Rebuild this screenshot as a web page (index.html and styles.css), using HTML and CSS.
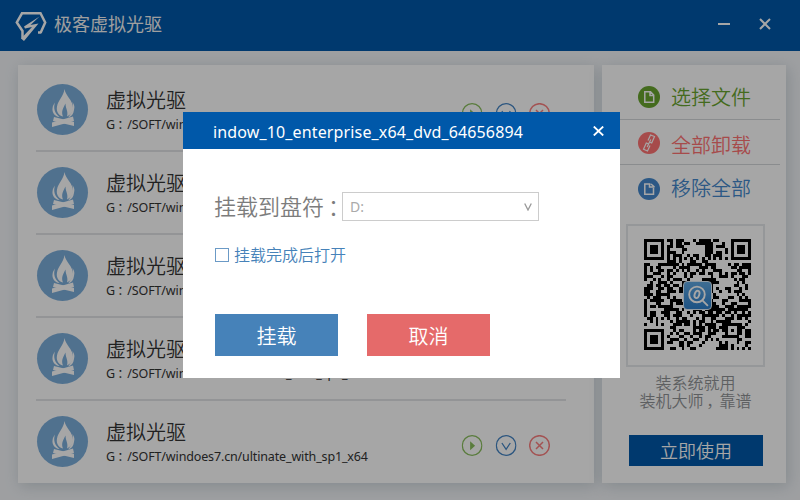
FILE: index.html
```html
<!DOCTYPE html>
<html lang="zh-CN">
<head>
<meta charset="utf-8">
<title>极客虚拟光驱</title>
<link rel="stylesheet" href="styles.css">
</head>
<body>
<svg class="defs" width="0" height="0">
  <symbol id="fire" viewBox="0 0 51 51">
    <path d="M27.500 5c1 7 8.500 11 8.500 19 0 4-2.500 7-6 8.500 1.500-5-1.500-8-1.500-13-2.500 5-4.500 8-2.500 13-4.500-1-7-5-6-10 1-6 6.500-10 7.500-17.500z"/>
    <path d="M18 18.500c-2 6 0 11 4.500 14.500-5-.5-7.500-5-7-8.500.2-3 1.500-4.500 2.500-6zM35.500 18c2.500 4 2 5.500 1.500 8-.5 4-2.500 6.500-6 7.500 4-5 5.500-9 4.500-15.500z"/>
    <path d="M17 33l20 5v4l-21-5z"/>
    <path d="M36 32.500l-21 6v4.500l22-6z" class="cut"/>
  </symbol>
  <symbol id="play" viewBox="0 0 21 21"><circle cx="10.500" cy="10.500" r="9.800"/><path class="solid" d="M8.500 6.200v9l5-4.500z"/></symbol>
  <symbol id="down" viewBox="0 0 21 21"><circle cx="10.500" cy="10.500" r="9.800"/><path d="M6.300 8l4.200 6.300L14.700 8"/></symbol>
  <symbol id="remove" viewBox="0 0 21 21"><circle cx="10.500" cy="10.500" r="9.800"/><path class="x" d="M7 7l7 7M14 7l-7 7"/></symbol>
</svg>

<div class="app">
  <header class="topbar">
    <svg class="logo" viewBox="0 0 32 30"><path d="M26 21.500h-3M25.500 22L30.200 11.500 25.500 2.300H7L1.800 11.500 7.500 20V27.500"/><path class="solid" d="M24.500 5.500L9 15.500l1 2 7-1.500L6 27.500 9 30 23.500 12.500l-8 1.500z"/></svg>
    <h1>极客虚拟光驱</h1>
    <div class="win-buttons">
      <svg width="12" height="12" viewBox="0 0 12 12"><path d="M0 6h12"/></svg>
      <svg width="12" height="12" viewBox="0 0 12 12"><path d="M1 1l10 10M11 1L1 11"/></svg>
    </div>
  </header>

  <main class="content">
    <section class="drives">
      <article class="drive"><svg class="disc"><use href="#fire"/></svg><div class="info"><h2>虚拟光驱</h2><p>G<span class="mark">：</span>/SOFT/windoes7.cn/ultinate_with_sp1_x64</p></div><div class="actions"><svg class="green"><use href="#play"/></svg><svg class="blue"><use href="#down"/></svg><svg class="red"><use href="#remove"/></svg></div></article>
      <article class="drive"><svg class="disc"><use href="#fire"/></svg><div class="info"><h2>虚拟光驱</h2><p>G<span class="mark">：</span>/SOFT/windoes7.cn/ultinate_with_sp1_x64</p></div><div class="actions"><svg class="green"><use href="#play"/></svg><svg class="blue"><use href="#down"/></svg><svg class="red"><use href="#remove"/></svg></div></article>
      <article class="drive"><svg class="disc"><use href="#fire"/></svg><div class="info"><h2>虚拟光驱</h2><p>G<span class="mark">：</span>/SOFT/windoes7.cn/ultinate_with_sp1_x64</p></div><div class="actions"><svg class="green"><use href="#play"/></svg><svg class="blue"><use href="#down"/></svg><svg class="red"><use href="#remove"/></svg></div></article>
      <article class="drive"><svg class="disc"><use href="#fire"/></svg><div class="info"><h2>虚拟光驱</h2><p>G<span class="mark">：</span>/SOFT/windoes7.cn/ultinate_with_sp1_x64</p></div><div class="actions"><svg class="green"><use href="#play"/></svg><svg class="blue"><use href="#down"/></svg><svg class="red"><use href="#remove"/></svg></div></article>
      <article class="drive"><svg class="disc"><use href="#fire"/></svg><div class="info"><h2>虚拟光驱</h2><p>G<span class="mark">：</span>/SOFT/windoes7.cn/ultinate_with_sp1_x64</p></div><div class="actions"><svg class="green"><use href="#play"/></svg><svg class="blue"><use href="#down"/></svg><svg class="red"><use href="#remove"/></svg></div></article>
    </section>

    <aside class="side">
      <nav>
        <a class="tool choose"><svg viewBox="0 0 22 22"><circle cx="11" cy="11" r="11"/><path d="M6.800 5.800h5.700l3.200 3.200v7.200H6.800zM12 6v3.500h3.500"/></svg><span>选择文件</span></a>
        <a class="tool unmount"><svg viewBox="0 0 22 22"><circle cx="11" cy="11" r="11"/><path d="M10 8.500l2.500-5.500 4 1.500-2.800 6.500-2-.8M12 13.500l-2.500 5.500-4-1.700L8.300 11l2 .8M12.800 7.500l-3.600 7.500"/></svg><span>全部卸载</span></a>
        <a class="tool clear"><svg viewBox="0 0 22 22"><circle cx="11" cy="11" r="11"/><path d="M12.500 6H6.800v10.300h8.700V10M11.500 6v3h5M13 6l3.500 3"/></svg><span>移除全部</span></a>
      </nav>
      <div class="qr">
        <svg id="qr" viewBox="0 0 37 37" preserveAspectRatio="none"></svg>
        <div class="qr-logo"><svg viewBox="0 0 26 26"><circle cx="12.500" cy="12" r="7.500"/><ellipse cx="12.500" cy="12" rx="2.200" ry="3.600" transform="rotate(20 12.500 12)"/><path d="M18 18l5 5"/></svg></div>
      </div>
      <p class="caption">装系统就用<br>装机大师<span class="mark">，</span>靠谱</p>
      <button class="use-now">立即使用</button>
    </aside>
  </main>
</div>

<div class="overlay"></div>
<div class="dialog">
  <div class="dialog-head"><span>indow_10_enterprise_x64_dvd_64656894</span><svg width="11" height="10" viewBox="0 0 11 10"><path d="M.8.500l9.400 9M10.200.500L.8 9.500"/></svg></div>
  <div class="dialog-body">
    <div class="field"><label>挂载到盘符<span class="mark">：</span></label><div class="select"><span>D:</span><svg width="8" height="8" viewBox="0 0 8 8"><path d="M.7.500L4 7 7.300.500"/></svg></div></div>
    <div class="check"><i></i><span>挂载完成后打开</span></div>
    <div class="buttons"><button>挂载</button><button class="cancel">取消</button></div>
  </div>
</div>
<script src="qr.js"></script>
</body>
</html>
```
FILE: styles.css
```css
* { box-sizing: border-box; margin: 0; padding: 0; }
body {
  width: 800px;
  height: 500px;
  overflow: hidden;
  position: relative;
  font-family: "Noto Sans", "Noto Sans CJK SC", sans-serif;
  font-weight: 400;
}
.mark { margin: 0 -.18em 0 .18em; font-family: "Noto Sans CJK SC", sans-serif; line-height: 1; }
h1, h2 { font-weight: 350; font-family: "Noto Sans CJK SC", sans-serif; }
button { border: 0; font-family: "Noto Sans CJK SC", sans-serif; font-weight: 350; color: #fff; }
svg { display: block; }
.defs { position: absolute; }

.app { height: 500px; background: #f3f5f8; }
.topbar {
  height: 51px;
  background: #0058a9;
  display: flex;
  align-items: flex-start;
  padding: 0 29px 0 15px;
}
.logo { width: 32px; height: 30px; margin-top: 11px; fill: none; stroke: #fff; stroke-width: 2.500; }
.logo .solid { fill: #fff; stroke: none; }
.topbar h1 { font-size: 18px; line-height: 26px; margin: 10px 0 0 7px; font-weight: 400; color: #f4f4f4; }
.win-buttons { margin: 18px 0 0 auto; display: flex; gap: 29px; fill: none; stroke: #fff; stroke-width: 2; }

.content { display: flex; align-items: flex-start; gap: 8px; padding: 14px 14px 0 18px; }
.drives, .side { height: 418px; background: #fff; box-shadow: 2px 3px 14px rgba(60, 90, 110, .22); }
.drives { width: 576px; padding: 4px 28px 0 18px; }
.drive { height: 83px; display: flex; align-items: flex-start; border-bottom: 2px solid #e2e4e6; }
.drive:last-child { border-bottom: 0; }
.disc { width: 51px; height: 51px; margin: 15px 0 0 1px; border-radius: 50%; background: #7caedb; fill: #fff; }
.disc .cut { stroke: #7caedb; stroke-width: 1; }
.info { margin: 17px 0 0 18px; color: #333; }
.info h2 { font-size: 20px; line-height: 28px; }
.info p { font-size: 12.500px; line-height: 18px; height: 18px; margin-top: 2px; white-space: nowrap; letter-spacing: -.14px; }
.actions { margin: 34px 16px 0 auto; display: flex; gap: 13px; }
.actions svg { width: 21px; height: 21px; fill: none; stroke: currentColor; stroke-width: 1.3; }
.actions .green, .actions .blue { transform: translateX(.6px); }
.actions .red { stroke-width: 1.5; }
.solid { fill: currentColor; stroke: none; }
.green { color: #8abf5e; }
.blue { color: #4484c4; }
.red { color: #fa8080; }

.side { width: 184px; padding: 10px 6px 0 18px; }
.tool { height: 45px; display: flex; align-items: center; gap: 11px; padding-left: 18px; border-bottom: 1px solid #d5d8da; font-family: "Noto Sans CJK SC", sans-serif; font-size: 20px; font-weight: 350; line-height: 28px; }
.tool:last-child { border: 0; }
.tool svg { width: 22px; height: 22px; fill: currentColor; }
.tool path { fill: none; stroke: #fff; stroke-width: 1.5; }
.choose { color: #69a52e; }
.unmount { color: #ff7474; }
.unmount svg { margin-top: 1px; }
.unmount span { padding-top: 5px; }
.clear { color: #4488cc; }
.clear svg { margin-top: 2px; }
.unmount path { stroke-width: 1.2; }
.qr { width: 139px; height: 143px; margin: 14px 0 0 6px; border: 2px solid #e5e9ec; padding: 13px 13px 0 16px; position: relative; }
#qr { width: 107px; height: 111px; fill: #000; shape-rendering: crispEdges; }
.qr-logo { position: absolute; left: 55px; top: 55px; width: 29px; height: 29px; border: 1px solid #dcebf7; border-radius: 4px; background: linear-gradient(#60a8e2, #2d7fcb); }
.qr-logo svg { width: 27px; height: 27px; fill: none; stroke: #fff; stroke-width: 1.8; }
.caption { margin: 6px 0 0 -6px; text-align: center; font: 350 16px/18px "Noto Sans CJK SC", sans-serif; color: #909396; width: 163px; }
.use-now { display: block; width: 134px; height: 31px; margin: 26px 0 0 9px; font-size: 18px; line-height: 31px; background: #0058a9; }

.overlay { position: absolute; inset: 0; background: rgba(0, 0, 0, .35); }
.dialog { position: absolute; left: 183px; top: 112px; width: 437px; height: 266px; background: #fff; }
.dialog-head { height: 37px; background: #0058a9; color: #fff; display: flex; align-items: center; justify-content: space-between; padding: 0 16px 0 30px; font-size: 16px; letter-spacing: .14px; }
.dialog-head span { padding-top: 2px; }
.dialog-head svg { fill: none; stroke: #fff; stroke-width: 1.8; }
.dialog-body { padding: 43px 32px 0; }
.field { display: flex; align-items: center; height: 29px; }
.field label { width: 127px; margin: -2px 0 0 -1px; white-space: nowrap; font: 350 22px/29px "Noto Sans CJK SC", sans-serif; color: #7c7c7c; }
.select { width: 197px; height: 29px; margin-left: 1px; border: 1px solid #ccc; display: flex; align-items: center; justify-content: space-between; padding: 0 6px 0 7px; font-size: 14px; color: #aaa; flex: none; }
.select svg { fill: none; stroke: #999; stroke-width: 1.3; }
.check { display: flex; align-items: center; height: 24px; margin-top: 22px; gap: 5px; font: 350 16px/24px "Noto Sans CJK SC", sans-serif; color: #4682b9; }
.check i { width: 14px; height: 14px; border: 1px solid #6b9ac6; }
.check span { margin-top: -2px; }
.buttons { display: flex; gap: 29px; margin-top: 47px; }
.buttons button { width: 123px; height: 42px; font-size: 20px; background: #4682b9; }
.buttons .cancel { background: #e56a6a; }
```
FILE: qr.js
```js
// Draws a 37 x 37 module code with finder, timing and alignment patterns.
const N = 37;
const finders = [[0, 0], [N - 7, 0], [0, N - 7]];
let seed = 20177;
const next = () => (seed = (seed * 1103515245 + 12345) % 2147483648) / 2147483648;
let d = '';
for (let y = 0; y < N; y++) {
  for (let x = 0; x < N; x++) {
    let on = next() < 0.5;
    if (x === 6 || y === 6) on = (x + y) % 2 === 0;
    const a = Math.max(Math.abs(x - 30), Math.abs(y - 30));
    if (a < 3) on = a !== 1;
    for (const [fx, fy] of finders) {
      const r = Math.max(Math.abs(x - fx - 3), Math.abs(y - fy - 3));
      if (r < 5) on = r === 3 || r < 2;
    }
    if (on) d += `M${x} ${y}h1v1h-1z`;
  }
}
const path = document.createElementNS('http://www.w3.org/2000/svg', 'path');
path.setAttribute('d', d);
document.getElementById('qr').append(path);
```
